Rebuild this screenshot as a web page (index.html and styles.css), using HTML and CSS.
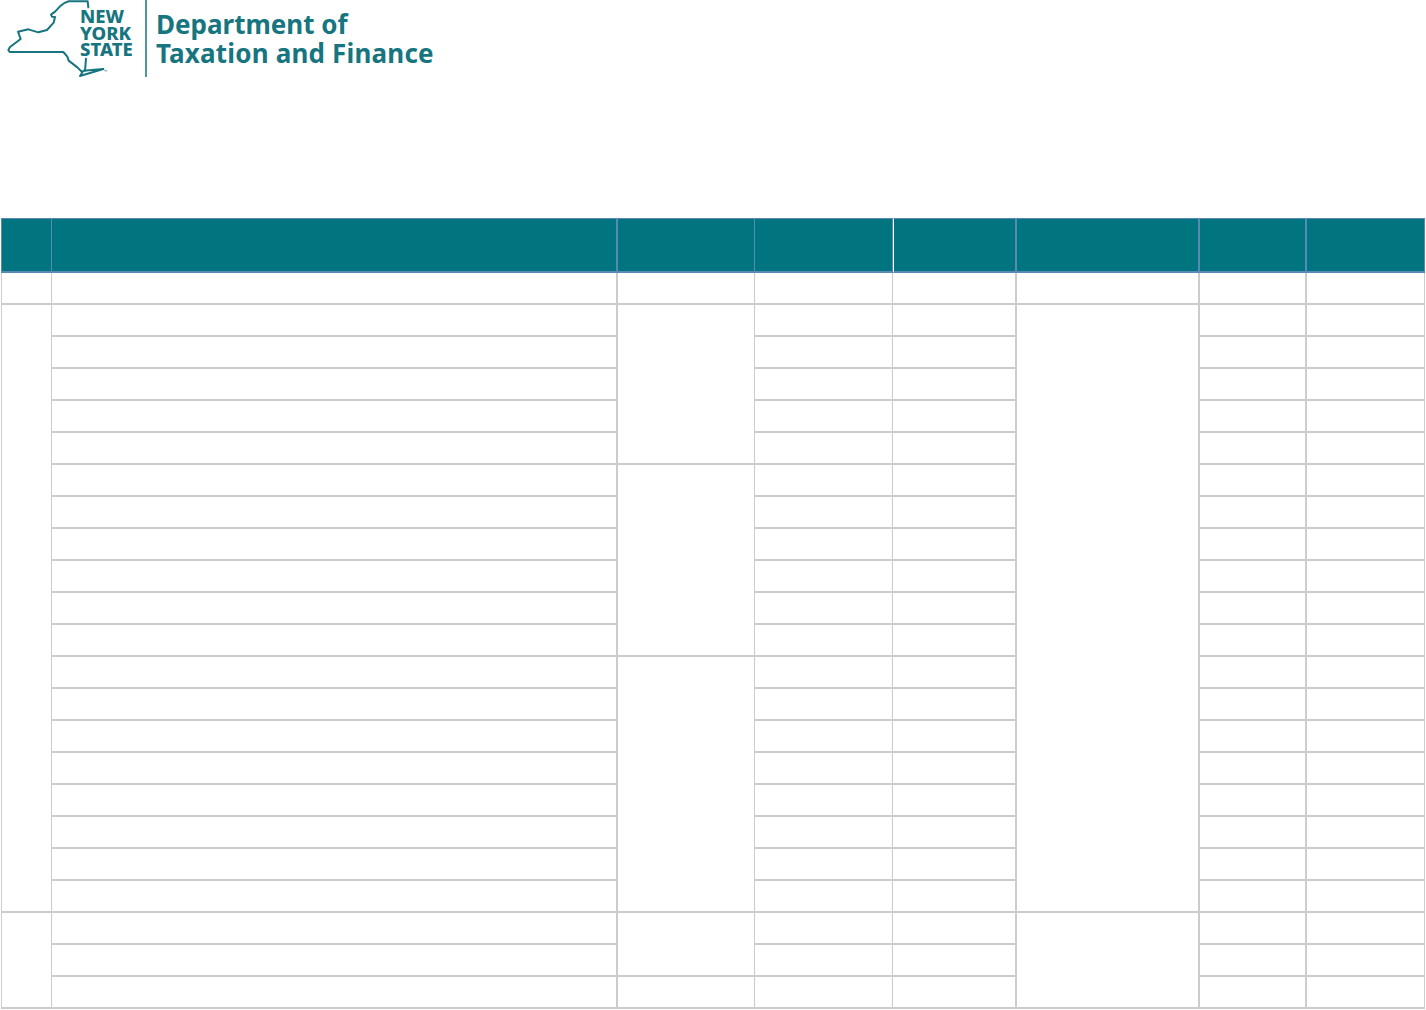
FILE: index.html
```html
<!DOCTYPE html>
<html lang="en">
<head>
<meta charset="utf-8">
<title>Department of Taxation and Finance</title>
<link rel="stylesheet" href="styles.css">
</head>
<body>
<header class="masthead">
  <div class="mark">
    <svg class="state" viewBox="0 0 450 255" width="150" height="85" aria-hidden="true">
      <path class="outline" d="M265 22 L263 4 L206 4 Q192 8 180 19 L166 34 L153 44 L156 50 L165 51 L161 68 L141 90 L115 97 L85 88 L54 95 L62 117 L30 141 L25 150 L29 156 L190 156 L202 170 L206 182 L232 202 L246 216"/>
      <path class="outline" d="M258 176 L255 212"/>
      <path class="outline" d="M240 228 L250 212 L310 207 L240 228 Z"/>
    </svg>
    <div class="wordmark"><span>NEW</span><span>YORK</span><span>STATE</span></div>
    <span class="tm">™</span>
  </div>
  <div class="agency"><span>Department of</span><span class="agency-name">Taxation and Finance</span></div>
</header>
<table class="grid">
  <colgroup>
    <col class="w1"><col class="w2"><col class="w3"><col class="w4"><col class="w5"><col class="w6"><col class="w7"><col class="w8">
  </colgroup>
  <thead>
    <tr>
      <th class="first"></th><th class="heavy"></th><th></th><th></th><th class="heavy after-pale"></th><th class="heavy"></th><th class="heavy"></th><th></th>
    </tr>
  </thead>
  <tbody id="rows"></tbody>
</table>
<script src="rows.js"></script>
</body>
</html>
```
FILE: styles.css
```css
html, body { margin: 0; background: #fff; }
body { width: 1426px; font-family: "Noto Sans", sans-serif; }

.masthead { height: 218px; box-sizing: border-box; display: flex; align-items: flex-start; gap: 9px; }
.mark { position: relative; width: 145px; height: 77px; border-right: 2px solid #4f979e; flex: none; }
.state { display: block; position: absolute; left: 0; top: 0; }
.outline { fill: none; stroke: #17757f; stroke-width: 6; stroke-linejoin: round; stroke-linecap: round; }
.wordmark { position: absolute; left: 80px; top: 8px; display: flex; flex-direction: column; color: #17757f; font-weight: 800; font-size: 18.5px; line-height: 16.5px; }
.tm { position: absolute; left: 104px; top: 70px; font-size: 4px; line-height: 4px; color: #17757f; }
.agency { display: flex; flex-direction: column; color: #17757f; font-weight: 700; font-size: 26px; line-height: 29px; padding-top: 10px; white-space: nowrap; }
.agency span, .wordmark span { display: block; }
.agency .agency-name { letter-spacing: 0.18px; }

.grid { margin-left: 1px; width: 1424px; table-layout: fixed; border-collapse: separate; border-spacing: 0; }
.w1 { width: 51px; } .w2 { width: 566px; } .w3 { width: 137px; } .w4 { width: 138px; }
.w5 { width: 124px; } .w6 { width: 183px; } .w7 { width: 107px; } .w8 { width: 118px; }

.grid th, .grid td { padding: 0; box-sizing: border-box; }
.grid th { height: 55px; background: #00757f; border-top: 1px solid #5b89b6; border-bottom: 2px solid #5b89b6; border-right: 1px solid #5b89b6; }
.grid th.first { border-left: 1px solid #5b89b6; }
.grid th.heavy { border-right-width: 2px; }
.grid th.after-pale { border-left: 1px solid #fff; }

.grid td { height: 32px; border-bottom: 2px solid #ccc; border-right: 1px solid #ccc; }
.grid td.c1 { border-left: 1px solid #ccc; }
.grid td.heavy { border-right-width: 2px; }
```
FILE: rows.js
```js
// Row structure of the blank form: which columns merge rows, from which row and for how many.
var columns = ['c1', 'c2', 'c3', 'c4', 'c5', 'c6', 'c7', 'c8'];
var layout = {
  c1: { 0: 1, 1: 19, 20: 3 },
  c3: { 0: 1, 1: 5, 6: 6, 12: 8, 20: 2, 22: 1 },
  c6: { 0: 1, 1: 19, 20: 3 }
};
var heavy = { c2: true, c5: true, c6: true, c7: true };
var body = document.getElementById('rows');
for (var r = 0; r < 23; r++) {
  var tr = document.createElement('tr');
  columns.forEach(function (c) {
    var spans = layout[c];
    if (spans && !(r in spans)) return;
    var td = document.createElement('td');
    td.className = c + (heavy[c] ? ' heavy' : '');
    if (spans && spans[r] > 1) td.rowSpan = spans[r];
    tr.appendChild(td);
  });
  body.appendChild(tr);
}
```
